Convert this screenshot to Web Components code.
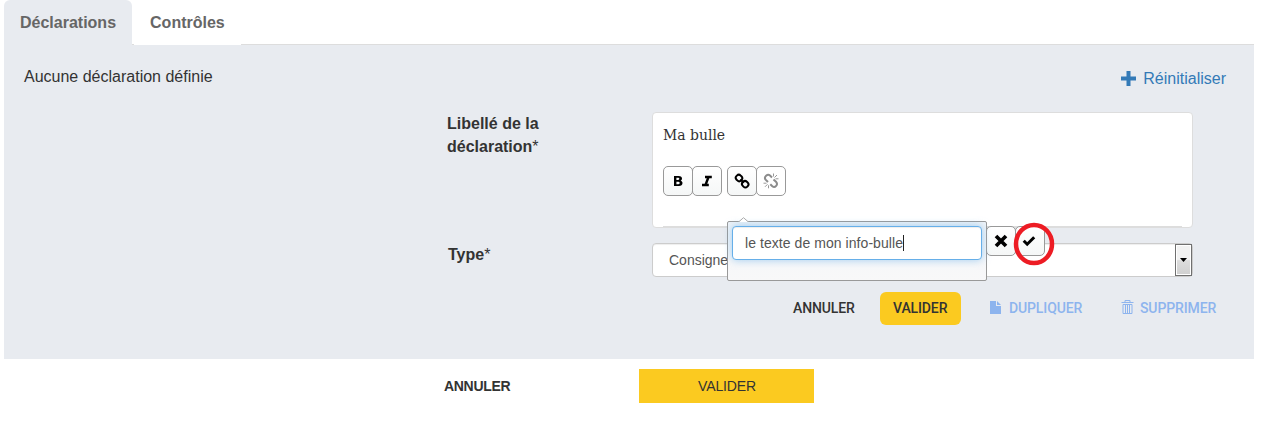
<!DOCTYPE html>
<html lang="fr">
<head>
<meta charset="utf-8">
<title>Déclarations</title>
<style>
body{margin:0;background:#fff;color:#333;font-family:"Liberation Sans",Arial,sans-serif;font-size:16px}
</style>
</head>
<body>
<declaration-page></declaration-page>
<script>
const define = (name, html) => customElements.define(name, class extends HTMLElement {
  constructor() {
    super();
    const t = document.createElement('template');
    t.innerHTML = html;
    this.attachShadow({mode: 'open'}).appendChild(t.content.cloneNode(true));
  }
});

define('tab-item', `<style>
:host{display:block;box-sizing:border-box;height:45px;padding:0 16px;line-height:46px;font-weight:bold;color:#666;background:#fff;white-space:nowrap}
:host([active]){background:#e8ebf0;border-radius:6px 6px 0 0}
</style><slot></slot>`);

define('tab-bar', `<style>
:host{display:flex;gap:2px;height:45px;border-bottom:1px solid #ddd;box-sizing:border-box}
</style><slot></slot>`);

define('form-label', `<style>
:host{display:block;font-weight:bold;line-height:23px}
:host::after{content:"*";font-weight:normal}
</style><slot></slot>`);

define('tool-button', `<style>
:host{display:flex;align-items:center;justify-content:center;box-sizing:border-box;width:30px;height:30px;border:1px solid #999;border-radius:5px;background:linear-gradient(#fff,#f5f7f7);color:#000}
:host([dim]){color:#8c8c8c;background:#fff}
</style><slot></slot>`);

define('link-popover', `<style>
:host{display:flex;align-items:flex-start}
.box{position:relative;box-sizing:border-box;width:260px;height:60px;border:1px solid #999;border-radius:2px;background:linear-gradient(#eef3f8,#f6f7f9 60%,#f8f8f9);padding:4px}
.tip{position:absolute;left:10px;top:-5px}
.input{box-sizing:border-box;height:34px;border:1px solid #66afe9;border-radius:4px;background:#fff;box-shadow:0 0 8px rgba(102,175,233,.6),inset 0 1px 1px rgba(0,0,0,.07);display:flex;align-items:center;padding-left:12px;font-size:14px;letter-spacing:.06px;color:#555;white-space:nowrap}
.caret{width:1px;height:16px;background:#222}
.actions{display:flex;margin:5px 0 0 -1px}
.actions tool-button+tool-button{margin-left:-1px}
</style>
<div class="box"><svg class="tip" width="12" height="5"><path d="M0 5.500 5.500.7 11 5.500" fill="#fff" stroke="#aaa"/></svg>
<div class="input"><span>le texte de mon info-bulle</span><i class="caret"></i></div></div>
<div class="actions">
<tool-button><svg width="14" height="14" viewBox="0 0 14 14"><path d="M2 2 12 12M12 2 2 12" stroke="#000" stroke-width="3.7"/></svg></tool-button>
<tool-button><svg width="14" height="12" viewBox="0 0 14 12" style="margin-right:3px"><path d="M1.7 5.7 5.2 9.2 12.2 2.2" fill="none" stroke="#000" stroke-width="3"/></svg></tool-button>
</div>`);

define('rich-editor', `<style>
:host{display:block;box-sizing:border-box;position:relative;height:116px;border:1px solid #ddd;border-radius:4px;background:#fff;padding:10px}
.text{font-family:"DejaVu Serif Condensed","DejaVu Serif",serif;font-stretch:condensed;font-size:15.5px;line-height:24px;height:43px}
.bar{display:flex}
.bar tool-button+tool-button{margin-left:-1px}
.bar .gap{margin-left:5px!important}
hr{margin:30px 0 0;border:0;height:1px;background:#ddd}
link-popover{position:absolute;z-index:2;left:74px;top:108px}
.ring{position:absolute;z-index:3;left:360px;top:109px}
</style>
<div class="text">Ma bulle</div>
<div class="bar">
<tool-button><svg width="10" height="12" viewBox="0 0 10 12"><path fill-rule="evenodd" d="M1 1h4.600C8 1 9 2.100 9 3.600c0 1-.5 1.700-1.300 2.100C8.800 6.100 9.500 6.900 9.500 8.100 9.500 10 8.200 11 6 11H1ZM3.400 2.800v2.200h1.800c1.500 0 1.500-2.200 0-2.200ZM3.400 6.800v2.400h2.100c1.700 0 1.700-2.400 0-2.400Z"/></svg></tool-button>
<tool-button><svg width="12" height="12" viewBox="0 0 12 12"><path d="M4 2h6.800M1 10h6.800M7.500 2 4.500 10" fill="none" stroke="#000" stroke-width="2.400"/></svg></tool-button>
<tool-button class="gap"><svg width="16" height="16" viewBox="0 0 16 16" fill="none" stroke="#000" stroke-width="2"><rect x="-3.200" y="-2.900" width="6.400" height="5.800" rx="2.700" transform="translate(5 5) rotate(45)"/><rect x="-3.200" y="-2.900" width="6.400" height="5.800" rx="2.700" transform="translate(11.200 11.200) rotate(45)"/><path d="m6.400 6.400 3.400 3.400"/></svg></tool-button>
<tool-button dim><svg width="16" height="16" viewBox="0 0 16 16" fill="none" stroke="currentColor"><path stroke-width="2" d="M9 4.500 7 2.500C4.500.500.500 4 2.600 6.700L5 9M10.500 6.500l2.500 2.300c2.600 2.700-1 6.700-3.700 4.500L7.300 11.300"/><path stroke-width=".9" d="M10.500 3.500V.500M11.500 4.500l2.500-2.500M12.500 5.800h3M5.500 12.300v3M4.500 11.300l-2.500 2.500M3.500 10.200h-3"/></svg></tool-button>
</div><hr>
<link-popover></link-popover>
<svg class="ring" width="42" height="44"><ellipse cx="21" cy="22" rx="18" ry="19" fill="none" stroke="#ed1c24" stroke-width="4.500"/></svg>`);

define('select-field', `<style>
:host{display:flex;justify-content:space-between;align-items:center;box-sizing:border-box;height:34px;border:1px solid #ccc;border-radius:4px;background:#fff;padding-left:16px;font-size:14px;color:#555;box-shadow:inset 0 1px 1px rgba(0,0,0,.07)}
.arrow{box-sizing:border-box;width:17px;height:32px;border:1px solid #707070;box-shadow:inset 0 0 0 1px #fff;background:linear-gradient(#f2f2f2 0 48%,#ddd 52%,#cfcfcf);display:flex;align-items:center;justify-content:center}
</style><slot></slot><div class="arrow"><svg width="7" height="4"><path d="M0 0h7L3.500 4Z"/></svg></div>`);

define('text-action', `<style>
:host{display:flex;align-items:center;box-sizing:border-box;height:33px;padding-bottom:1px;font:500 14px Roboto,sans-serif;letter-spacing:-.12px;white-space:nowrap}
:host([primary]){background:#fbca20;border-radius:6px;padding:0 0 1px 13px}
:host([disabled]){color:#8db4ee}
</style><slot></slot>`);

define('declaration-panel', `<style>
:host{display:block;box-sizing:border-box;height:314px;background:#e8ebf0;padding:20px 28px 0 20px}
.head{display:flex;justify-content:space-between;height:47px;line-height:24px}
.reset{display:flex;align-items:center;height:28px;gap:7px;color:#337ab7}
.reset svg{margin-bottom:2px}
.form{display:grid;grid-template-columns:205px 541px;margin-left:423px;row-gap:15px}
.label{width:110px}
.type{margin-left:1px}
.actions{display:flex;justify-content:flex-end;margin:15px 9px 0 0}
.a{width:61px;margin-right:26px}.v{width:81px;margin-right:29px}.d{width:95px;margin-right:36px}.s{width:96px}
.d svg{margin:0 8px 1px 0}.s svg{margin:0 6px 2px 0}
</style>
<div class="head"><div>Aucune déclaration définie</div><div class="reset"><svg width="15" height="15"><path d="M0 7.500h15M7.500 0v15" stroke="currentColor" stroke-width="4"/></svg><span>Réinitialiser</span></div></div>
<div class="form"><form-label class="label">Libellé de la déclaration</form-label><rich-editor></rich-editor>
<form-label class="type">Type</form-label><select-field><span>Consigne</span></select-field></div>
<div class="actions"><text-action class="a">ANNULER</text-action><text-action class="v" primary>VALIDER</text-action>
<text-action class="d" disabled><svg width="11" height="13" fill="currentColor"><path d="M0 0h6v5h5v8H0ZM7 0l4 4H7Z"/></svg>DUPLIQUER</text-action>
<text-action class="s" disabled><svg width="13" height="14" fill="none" stroke="currentColor"><path d="M.5 2.500h12M4 2V.5h5V2M2 4.500h9v9H2ZM4.500 5v8M6.500 5v8M8.500 5v8"/></svg>SUPPRIMER</text-action></div>`);

define('page-footer', `<style>
:host{display:flex;align-items:center;height:34px;margin:10px 0 0 440px;font-size:14px}
b{width:195px;letter-spacing:-.3px}
div{box-sizing:border-box;width:175px;height:34px;line-height:34px;padding-left:1px;text-align:center;letter-spacing:-.15px;background:#fbca20}
</style><b>ANNULER</b><div>VALIDER</div>`);

define('declaration-page', `<style>
:host{display:block;width:1250px;margin-left:4px;height:427px;overflow:hidden}
</style>
<tab-bar><tab-item active>Déclarations</tab-item><tab-item>Contrôles</tab-item></tab-bar>
<declaration-panel></declaration-panel><page-footer></page-footer>`);
</script>
</body>
</html>
